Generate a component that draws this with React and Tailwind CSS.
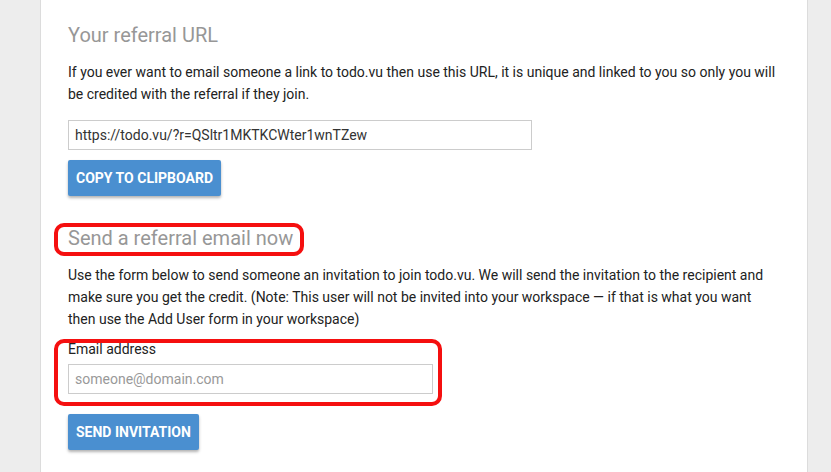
import React from 'react';

// red annotation frame drawn over a block
const Marker = ({ className }) => (
  <div className={`pointer-events-none absolute rounded-[10px] border-[4px] border-[#f50f0f] ${className}`} />
);

const Button = ({ children }) => (
  <button className="h-[36px] rounded-[2px] bg-[#4a8fd0] px-[8px] text-[14px] font-bold uppercase leading-none text-white shadow-[0_2px_3px_rgba(0,0,0,0.3)]">
    {children}
  </button>
);

const App = () => {
  return (
    <div className="min-h-screen bg-[#ededed] font-['Roboto',sans-serif]">
      <div className="ml-[40px] min-h-[472px] w-[768px] border-x border-[#dcdcdc] bg-white px-[27px] pt-[25px]">
        {/* referral link */}
        <h2 className="text-[20px] leading-[20px] text-[#979797]">Your referral URL</h2>
        <p className="mt-[16px] text-[14px] leading-[22px] text-[#222]">
          If you ever want to email someone a link to todo.vu then use this URL, it is unique and linked to you so only you will be credited with the referral if they join.
        </p>
        <input
          readOnly
          value="https://todo.vu/?r=QSltr1MKTKCWter1wnTZew"
          className="mt-[15px] block h-[30px] w-[464px] border border-[#ccc] px-[6px] text-[14px] text-[#333] outline-none"
        />
        <div className="mt-[10px]">
          <Button>Copy to clipboard</Button>
        </div>

        {/* referral email */}
        <div className="relative mt-[32px] inline-block">
          <h2 className="text-[20px] leading-[20px] text-[#979797]">Send a referral email now</h2>
          <Marker className="-left-[14px] -right-[11px] -top-[5px] -bottom-[8px]" />
        </div>
        <p className="mt-[12px] text-[14px] leading-[22px] text-[#222]">
          Use the form below to send someone an invitation to join todo.vu. We will send the invitation to the recipient and make sure you get the credit. (Note: This user will not be invited into your workspace — if that is what you want then use the Add User form in your workspace)
        </p>
        <div className="relative mt-[9px] w-[365px]">
          <label className="block text-[14px] leading-[20px] text-[#222]">Email address</label>
          <input
            placeholder="someone@domain.com"
            className="mt-[5px] block h-[30px] w-full border border-[#ccc] px-[6px] text-[14px] text-[#333] outline-none placeholder:text-[#999]"
          />
          <Marker className="-left-[14px] -right-[9px] top-[0px] -bottom-[12px]" />
        </div>
        <div className="mt-[20px]">
          <Button>Send invitation</Button>
        </div>
      </div>
    </div>
  );
};

export default App;
